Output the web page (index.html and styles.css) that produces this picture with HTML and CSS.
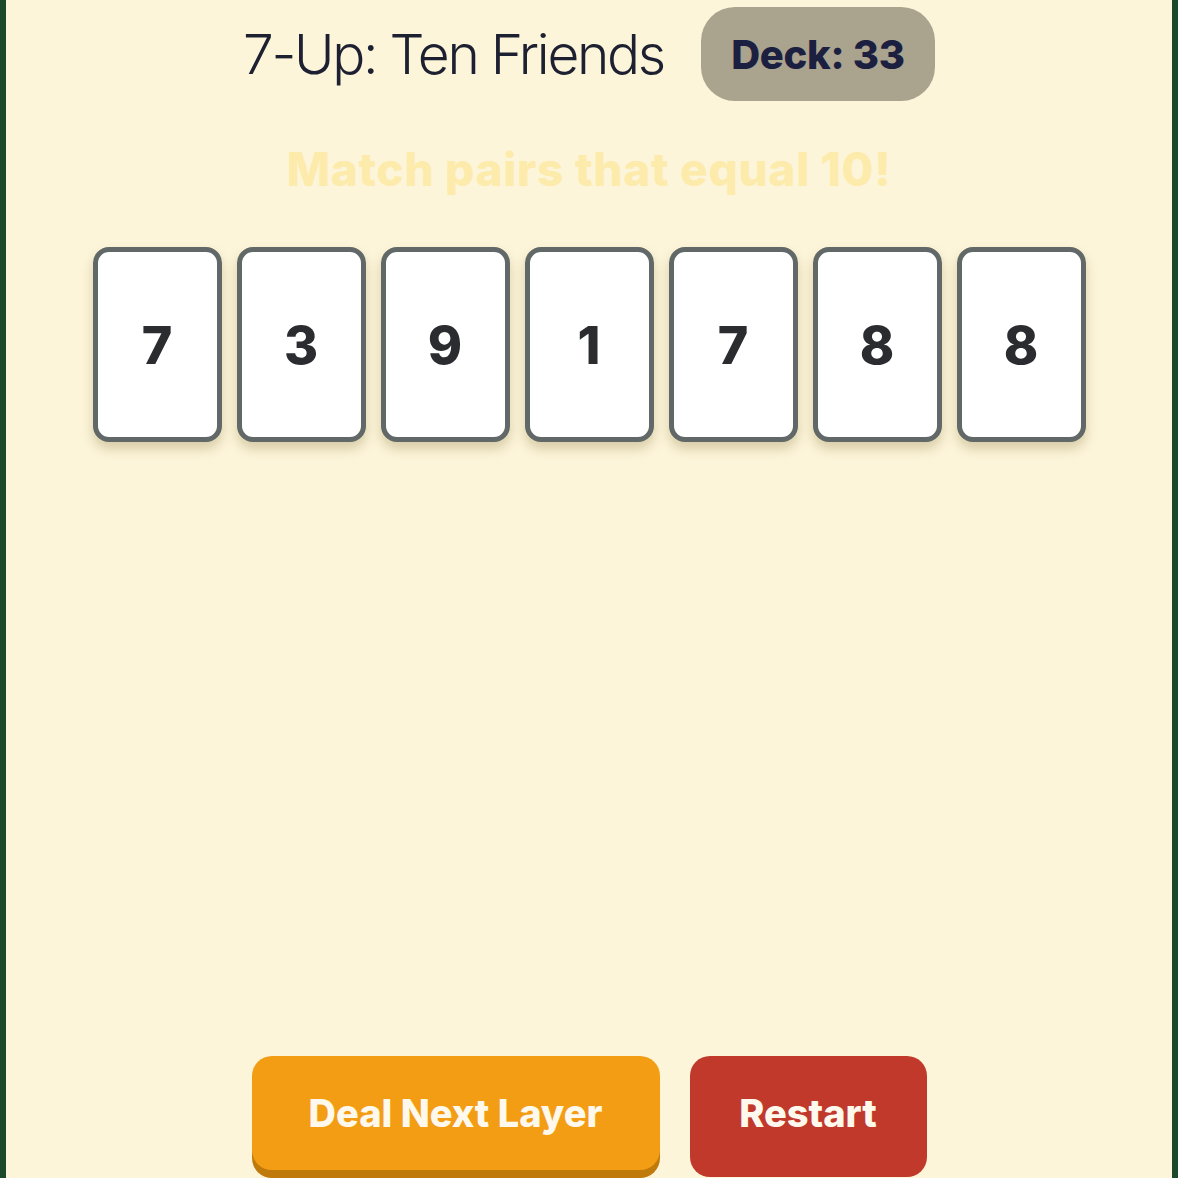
FILE: index.html
```html
<!DOCTYPE html>
<html lang="en">
<head>
<meta charset="utf-8">
<title>7-Up: Ten Friends</title>
<link rel="stylesheet" href="styles.css">
</head>
<body>
<div class="app">
  <header class="top">
    <h1 class="title">7-Up: Ten Friends</h1>
    <div class="deck">Deck: 33</div>
  </header>
  <p class="hint">Match pairs that equal 10!</p>
  <div class="row">
    <div class="card">7</div>
    <div class="card">3</div>
    <div class="card">9</div>
    <div class="card">1</div>
    <div class="card">7</div>
    <div class="card">8</div>
    <div class="card">8</div>
  </div>
  <div class="spacer"></div>
  <div class="actions">
    <button class="btn btn-deal">Deal Next Layer</button>
    <button class="btn btn-restart">Restart</button>
  </div>
</div>
</body>
</html>
```

FILE: styles.css
```css
* { box-sizing: border-box; }
html, body { margin: 0; padding: 0; height: 100%; overflow: hidden; }
body {
  background: #1b4a2b;
  font-family: "Inter", "Liberation Sans", sans-serif;
}
.app {
  margin: 0 6px;
  height: 1178px;
  background: #fdf5da;
  display: flex;
  flex-direction: column;
  align-items: center;
  padding-top: 7px;
}
.top {
  display: flex;
  align-items: center;
  gap: 37px;
}
.title {
  margin: 0;
  font-family: "Inter", sans-serif;
  font-weight: 300;
  font-size: 55px;
  letter-spacing: -2.3px;
  color: #1d2030;
}
.deck {
  width: 234px;
  height: 94px;
  border-radius: 34px;
  background: #aaa38d;
  color: #1b2040;
  font-weight: 800;
  font-size: 40px;
  display: flex;
  align-items: center;
  justify-content: center;
  letter-spacing: -0.3px;
}
.hint {
  margin: 38px 0 0;
  font-weight: 800;
  font-size: 46px;
  color: #fcebab;
  letter-spacing: 0.7px;
  line-height: 60px;
}
.row {
  margin-top: 48px;
  display: flex;
  gap: 15px;
}
.card {
  width: 129px;
  height: 195px;
  background: #ffffff;
  border: 5px solid #616867;
  border-radius: 16px;
  box-shadow: 0 7px 12px rgba(120, 100, 40, 0.28);
  display: flex;
  align-items: center;
  justify-content: center;
  font-weight: 800;
  font-size: 52px;
  color: #2a2c30;
  padding-top: 2px;
}
.spacer { flex: 1; }
.actions {
  display: flex;
  align-items: flex-start;
  gap: 30px;
  height: 122px;
}
.btn {
  border: none;
  border-radius: 20px;
  font-family: "Inter", sans-serif;
  font-weight: 800;
  font-size: 38px;
  color: #fff8ec;
  padding: 0;
  letter-spacing: 0;
}
.btn-deal {
  width: 408px;
  height: 114px;
  background: #f39d14;
  box-shadow: 0 8px 0 #c07a0c;
}
.btn-restart {
  width: 237px;
  height: 121px;
  padding-bottom: 7px;
  background: #c0392b;
}
```
